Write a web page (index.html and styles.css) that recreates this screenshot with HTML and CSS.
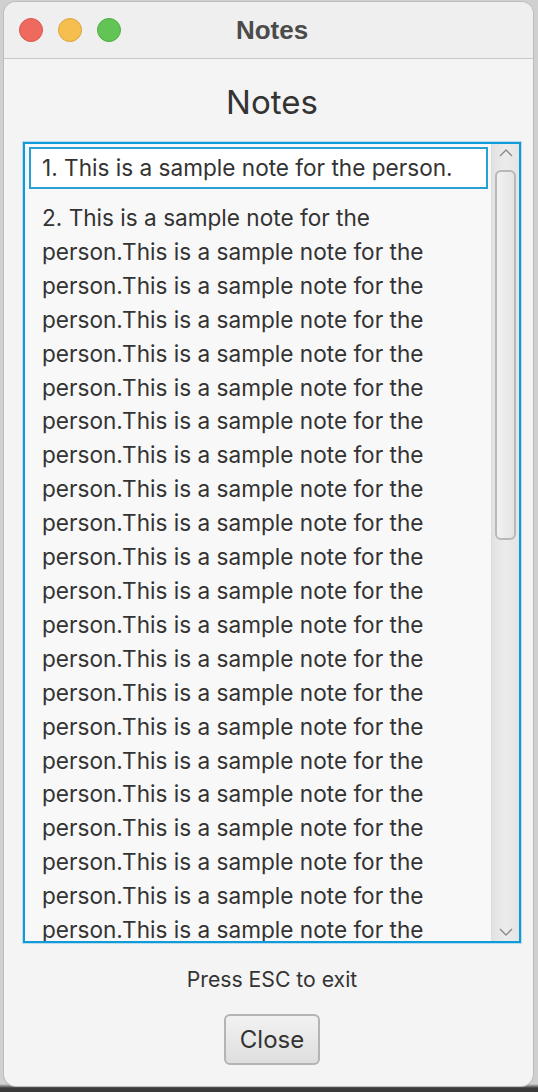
FILE: index.html
```html
<!DOCTYPE html>
<html>
<head>
<meta charset="utf-8">
<link rel="stylesheet" href="styles.css">
</head>
<body>
<div class="window">
  <div class="titlebar">
    <div class="lights">
      <span class="light red"></span>
      <span class="light yellow"></span>
      <span class="light green"></span>
    </div>
    <div class="wintitle">Notes</div>
  </div>
  <div class="content">
    <h1 class="heading">Notes</h1>
    <div class="listbox">
      <div class="list">
        <div class="item selected">1. This is a sample note for the person.</div>
        <div class="item multi">2. This is a sample note for the person.This is a sample note for the person.This is a sample note for the person.This is a sample note for the person.This is a sample note for the person.This is a sample note for the person.This is a sample note for the person.This is a sample note for the person.This is a sample note for the person.This is a sample note for the person.This is a sample note for the person.This is a sample note for the person.This is a sample note for the person.This is a sample note for the person.This is a sample note for the person.This is a sample note for the person.This is a sample note for the person.This is a sample note for the person.This is a sample note for the person.This is a sample note for the person.This is a sample note for the person.This is a sample note for the person.This is a sample note for the person.This is a sample note for the person.</div>
      </div>
      <div class="scrollbar">
        <svg class="arrow" width="18" height="12" viewBox="0 0 18 12"><path d="M3 9 L9 3 L15 9" fill="none" stroke="#8a8a8a" stroke-width="1.4"/></svg>
        <div class="track"><div class="thumb"></div></div>
        <svg class="arrow" width="18" height="12" viewBox="0 0 18 12"><path d="M3 3 L9 9 L15 3" fill="none" stroke="#8a8a8a" stroke-width="1.4"/></svg>
      </div>
    </div>
    <p class="hint">Press ESC to exit</p>
    <button class="close">Close</button>
  </div>
</div>
</body>
</html>
```
FILE: styles.css
```css
html, body {
  margin: 0;
  padding: 0;
}
body {
  width: 538px;
  height: 1092px;
  overflow: hidden;
  background: linear-gradient(to bottom, #d0d0d0 0, #d0d0d0 1084px, #3a3a3a 1088px);
  font-family: Inter, Roboto, "Liberation Sans", sans-serif;
}
.window {
  margin: 2px 5px 0 4px;
  height: 1084px;
  border-radius: 12px;
  background: #f4f4f4;
  overflow: hidden;
  display: flex;
  flex-direction: column;
  box-shadow: 0 0 0 1px #bdbdbd;
}
.titlebar {
  height: 56px;
  flex: none;
  background: #efefef;
  border-bottom: 1px solid #c9c9c9;
  position: relative;
  display: flex;
  align-items: center;
}
.lights {
  display: flex;
  gap: 15px;
  padding-left: 15px;
}
.light {
  width: 24px;
  height: 24px;
  border-radius: 50%;
  box-sizing: border-box;
}
.red { background: #ee6a5f; border: 1px solid #d9564b; }
.yellow { background: #f5be4f; border: 1px solid #dca43c; }
.green { background: #61c454; border: 1px solid #4fae43; }
.wintitle {
  position: absolute;
  left: 7px;
  right: 0;
  top: 0;
  height: 56px;
  line-height: 56px;
  text-align: center;
  font-family: "Liberation Sans", Arial, sans-serif;
  font-weight: bold;
  font-size: 26px;
  color: #4b4b4b;
}
.content {
  flex: 1;
  display: flex;
  flex-direction: column;
  align-items: center;
  padding-left: 7px;
}
.heading {
  margin: 24px 0 0;
  font-weight: normal;
  font-size: 33px;
  line-height: 38px;
  color: #333;
}
.listbox {
  margin-top: 21px;
  width: 498px;
  height: 801px;
  box-sizing: border-box;
  border: 2px solid #0f9ad8;
  box-shadow: 0 0 0 1px rgba(80, 170, 220, 0.35);
  background: #f8f8f8;
  display: flex;
  overflow: hidden;
}
.list {
  flex: 1;
  overflow: hidden;
}
.item {
  font-size: 22.6px;
  color: #333;
}
.selected {
  margin: 3px 3px 0 4px;
  height: 42px;
  box-sizing: border-box;
  border: 2px solid #27a0d6;
  background: #ffffff;
  padding-left: 11px;
  line-height: 38px;
  white-space: nowrap;
}
.multi {
  padding: 12px 20px 0 17px;
  line-height: 33.9px;
}
.scrollbar {
  width: 27px;
  flex: none;
  background: linear-gradient(to right, #e2e2e2, #ececec 50%, #e4e4e4);
  border-left: 1px solid #dcdcdc;
  display: flex;
  flex-direction: column;
  align-items: center;
}
.arrow {
  flex: none;
  margin: 3px 0;
}
.track {
  flex: 1;
  width: 100%;
  display: flex;
  justify-content: center;
}
.thumb {
  margin-top: 8px;
  width: 21px;
  height: 370px;
  box-sizing: border-box;
  border: 2px solid #b8b8b8;
  border-radius: 6px;
  background: linear-gradient(to right, #f2f2f2, #e4e4e4);
}
.hint {
  margin: 24px 0 0;
  font-size: 21.2px;
  line-height: 24px;
  color: #333;
}
.close {
  margin-top: 23px;
  width: 96px;
  height: 51px;
  border: 2px solid #b4b4b4;
  border-radius: 6px;
  background: linear-gradient(to bottom, #f2f2f2, #dedede);
  font-family: Inter, Roboto, "Liberation Sans", sans-serif;
  font-size: 24px;
  color: #333;
  padding: 0;
}
```
